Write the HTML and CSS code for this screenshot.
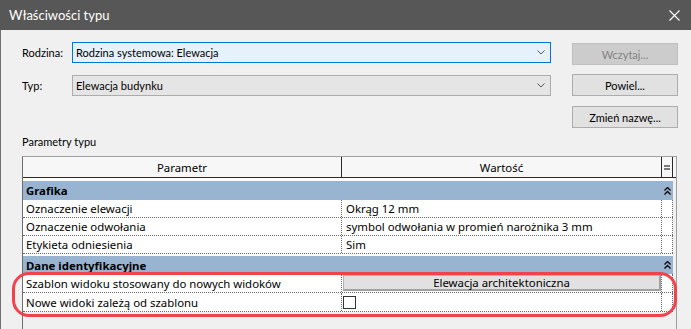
FILE: index.html
```html
<!DOCTYPE html>
<html lang="pl">
<head>
<meta charset="utf-8">
<title>Właściwości typu</title>
<link rel="stylesheet" href="styles.css">
</head>
<body>
<div class="dialog">
  <div class="titlebar">
    <span class="title">Właściwości typu</span>
    <svg class="close" width="11" height="11" viewBox="0 0 11 11"><path d="M0.5 0.5 L10.5 10.5 M10.5 0.5 L0.5 10.5" stroke="#fff" stroke-width="1.1" fill="none"/></svg>
  </div>
  <div class="body">
    <div class="top">
      <div class="fields">
        <div class="field">
          <span class="label">Rodzina:</span>
          <div class="combo focused"><span>Rodzina systemowa: Elewacja</span><svg width="8" height="5" viewBox="0 0 8 5"><path d="M0.5 0.5 L4 4 L7.5 0.5" stroke="#5a5a5a" fill="none"/></svg></div>
        </div>
        <div class="field">
          <span class="label">Typ:</span>
          <div class="combo"><span>Elewacja budynku</span><svg width="8" height="5" viewBox="0 0 8 5"><path d="M0.5 0.5 L4 4 L7.5 0.5" stroke="#5a5a5a" fill="none"/></svg></div>
        </div>
      </div>
      <div class="buttons">
        <div class="btn disabled">Wczytaj...</div>
        <div class="btn b2">Powiel...</div>
        <div class="btn b3">Zmień nazwę...</div>
      </div>
    </div>
    <div class="section-label">Parametry typu</div>
    <div class="grid">
      <div class="row header">
        <div class="c name">Parametr</div>
        <div class="c val">Wartość</div>
        <div class="c eq"><svg width="6" height="5" viewBox="0 0 6 5"><path d="M0 1 H6 M0 4 H6" stroke="#000" stroke-width="1"/></svg></div>
      </div>
      <div class="spacer3"></div>
      <div class="row group tall">
        <div class="gname">Grafika</div>
        <div class="gicon"><svg width="7" height="8" viewBox="0 0 7 8"><path d="M0.5 3.5 L3.5 0.5 L6.5 3.5 M0.5 7.5 L3.5 4.5 L6.5 7.5" stroke="#000" stroke-width="1.3" fill="none"/></svg></div>
      </div>
      <div class="row data">
        <div class="c name">Oznaczenie elewacji</div>
        <div class="c val">Okrąg 12 mm</div>
        <div class="c eq"></div>
      </div>
      <div class="row data">
        <div class="c name">Oznaczenie odwołania</div>
        <div class="c val">symbol odwołania w promień narożnika 3 mm</div>
        <div class="c eq"></div>
      </div>
      <div class="row data">
        <div class="c name">Etykieta odniesienia</div>
        <div class="c val">Sim</div>
        <div class="c eq"></div>
      </div>
      <div class="spacer2"></div>
      <div class="row group">
        <div class="gname">Dane identyfikacyjne</div>
        <div class="gicon"><svg width="7" height="8" viewBox="0 0 7 8"><path d="M0.5 3.5 L3.5 0.5 L6.5 3.5 M0.5 7.5 L3.5 4.5 L6.5 7.5" stroke="#000" stroke-width="1.3" fill="none"/></svg></div>
      </div>
      <div class="row data tall">
        <div class="c name">Szablon widoku stosowany do nowych widoków</div>
        <div class="c val"><div class="cellbtn">Elewacja architektoniczna</div></div>
        <div class="c eq"></div>
      </div>
      <div class="row data tall">
        <div class="c name">Nowe widoki zależą od szablonu</div>
        <div class="c val"><div class="check"></div></div>
        <div class="c eq"></div>
      </div>
    </div>
    <div class="highlight"></div>
  </div>
</div>
</body>
</html>
```
FILE: styles.css
```css
html, body {
  margin: 0;
  padding: 0;
}
body {
  width: 691px;
  height: 329px;
  overflow: hidden;
  background: #f0f0f0;
  font-family: "Lato", "Noto Sans", sans-serif;
  font-size: 11px;
  color: #000;
}
.dialog {
  height: 329px;
  display: flex;
  flex-direction: column;
}
.titlebar {
  height: 30px;
  flex: none;
  background: #575757;
  display: flex;
  align-items: center;
  justify-content: space-between;
  padding: 0 11px 0 9px;
  color: #fff;
}
.title {
  font-size: 13px;
}
.body {
  flex: 1;
  min-height: 0;
  position: relative;
  border-left: 1px solid #727272;
  padding-left: 20px;
  display: flex;
  flex-direction: column;
}
.top {
  display: flex;
  gap: 21px;
}
.fields {
  display: flex;
  flex-direction: column;
  gap: 12px;
  padding-top: 12px;
}
.field {
  display: flex;
  align-items: center;
}
.label {
  width: 51px;
  padding-left: 1px;
  box-sizing: border-box;
}
.combo {
  box-sizing: border-box;
  width: 479px;
  height: 21px;
  border: 1px solid #acacac;
  background: #e5e5e5;
  display: flex;
  align-items: center;
  justify-content: space-between;
  padding: 0 5px 0 3px;
}
.combo.focused {
  border-color: #0078d7;
  background: #e5f1fb;
}
.buttons {
  display: flex;
  flex-direction: column;
  padding-top: 13px;
}
.btn {
  box-sizing: border-box;
  width: 106px;
  height: 22px;
  border: 1px solid #adadad;
  background: #e1e1e1;
  display: flex;
  align-items: center;
  justify-content: center;
}
.btn.disabled {
  background: #cccccc;
  border-color: #bfbfbf;
  color: #838383;
}
.btn.b2 { margin-top: 9px; }
.btn.b3 { margin-top: 10px; }
.section-label {
  margin-top: 6px;
  height: 16px;
  line-height: 16px;
  padding-left: 1px;
}
.grid {
  flex: 1;
  min-height: 0;
  overflow: hidden;
  margin-top: 6px;
  margin-left: 1px;
  width: 653px;
  border: 1px solid #a0a0a0;
  border-left-color: #6e6e6e;
  border-bottom: none;
  font-family: "Noto Sans", sans-serif;
  font-size: 11.4px;
}
.row {
  display: flex;
  height: 18px;
  box-sizing: border-box;
}
.row.tall { height: 19px; }
.c {
  box-sizing: border-box;
  display: flex;
  align-items: center;
  white-space: nowrap;
  overflow: hidden;
}
.c.name { width: 318px; padding-left: 3px; }
.c.val { width: 320px; padding-left: 4px; }
.c.eq { width: 12px; justify-content: center; }
.header {
  height: 21px;
  background: #f7f7f7;
  border-bottom: 1px solid #2b2b2b;
}
.header .c { justify-content: center; padding: 0; }
.header .val { border-left: 1px solid #2b2b2b; }
.header .eq { border-left: 1px solid #2b2b2b; border-right: 1px solid #2b2b2b; }
.spacer3 { height: 3px; background: #fff; width: 650px; }
.spacer2 { height: 2px; background: #fff; width: 650px; }
.group {
  width: 650px;
  background: #99b4d1;
  align-items: center;
  justify-content: space-between;
}
.gname {
  font-weight: bold;
  padding-left: 3px;
}
.gicon {
  width: 12px;
  display: flex;
  justify-content: center;
}
.data {
  background: #fff;
  border-bottom: 1px dotted #6a6a6a;
  width: 650px;
}
.data .val { border-left: 1px dotted #6a6a6a; }
.data .eq { border-left: 1px dotted #6a6a6a; border-right: 1px dotted #6a6a6a; }
.data .val:has(.cellbtn), .data .val:has(.check) { padding-left: 1px; }
.cellbtn {
  box-sizing: border-box;
  width: 318px;
  height: 16px;
  background: #e1e1e1;
  border: 1px solid #b4b4b4;
  border-right: 2px solid #a0a0a0;
  border-bottom: 2px solid #a0a0a0;
  display: flex;
  align-items: center;
  justify-content: center;
}
.check {
  box-sizing: border-box;
  width: 13px;
  height: 13px;
  border: 1px solid #333;
  background: #fff;
}
.highlight {
  position: absolute;
  left: 11px;
  top: 242px;
  width: 665px;
  height: 45px;
  box-sizing: border-box;
  border: 3px solid #f2434d;
  border-radius: 17px;
}
```
